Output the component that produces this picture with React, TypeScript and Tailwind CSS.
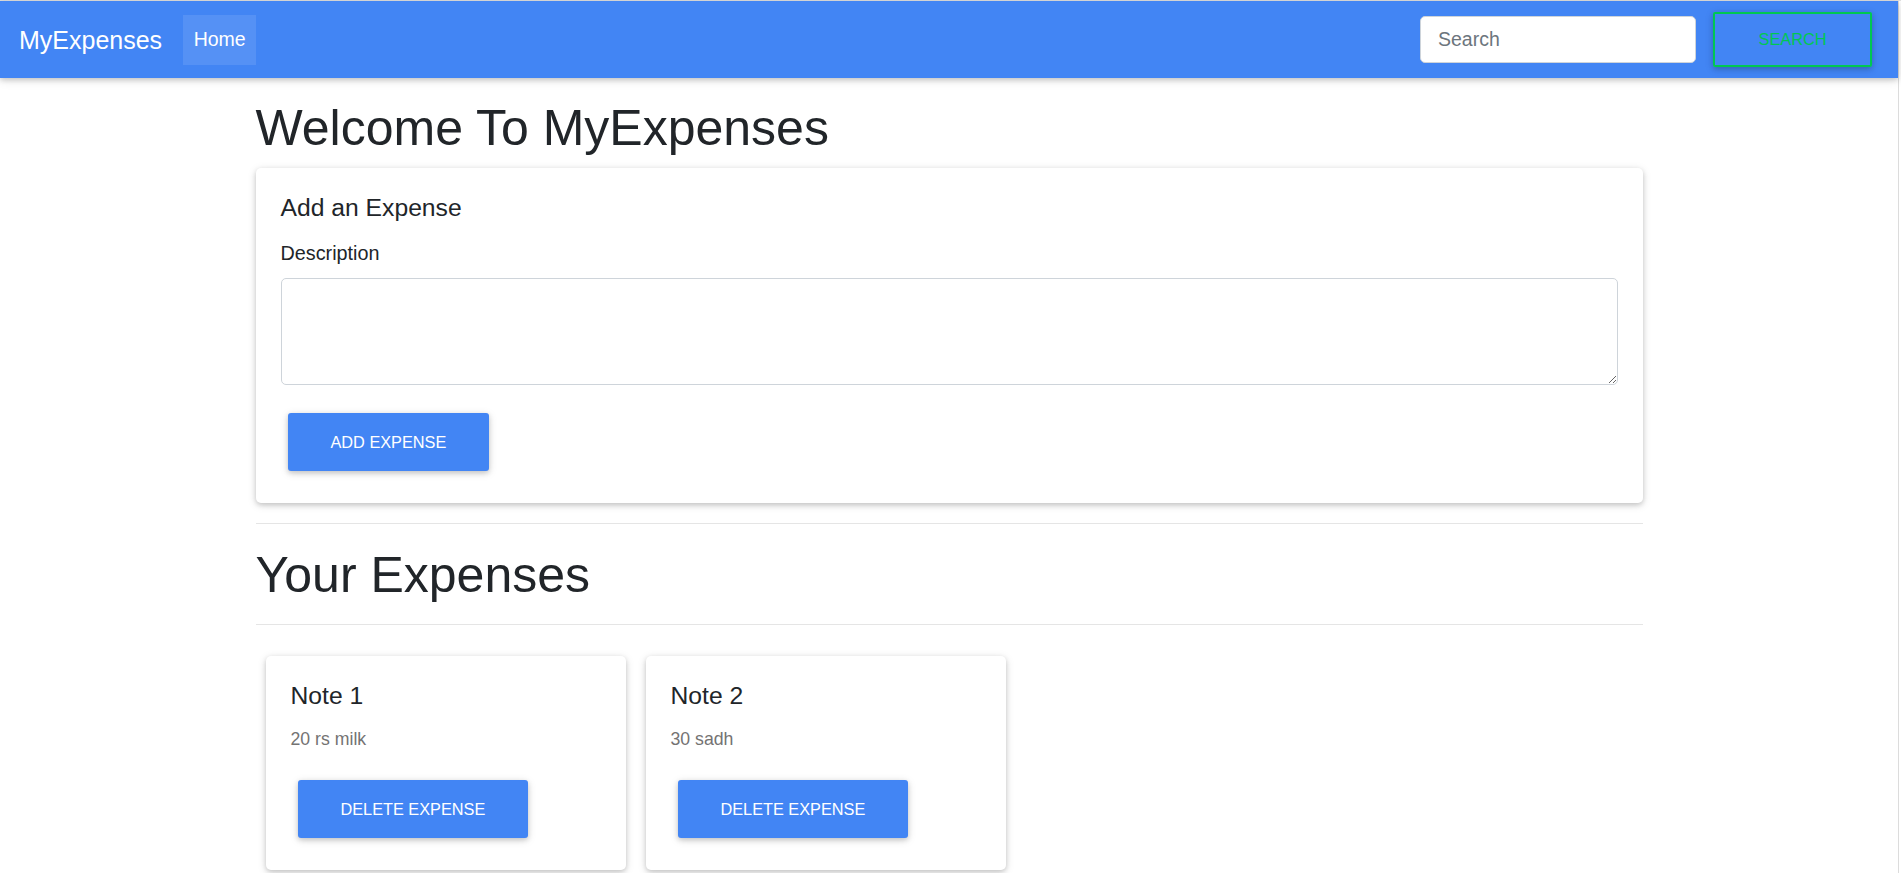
const notes = [
    { title: 'Note 1', description: '20 rs milk' },
    { title: 'Note 2', description: '30 sadh' },
];

function Navbar() {
    return (
        <nav className='relative z-10 flex items-center h-[77px] pl-[19px] pr-[26px] bg-[#4285f4] shadow-[0_2px_5px_0_rgba(0,0,0,0.16),0_2px_10px_0_rgba(0,0,0,0.12)]'>
            <a className='text-white text-[25px] leading-[38px] mr-[21px]' href='#'>MyExpenses</a>
            <a className='text-white text-[19.5px] leading-[29px] px-[10.5px] py-[10.5px] bg-white/10' href='#'>Home</a>
            <form className='ml-auto flex items-center' onSubmit={(e) => e.preventDefault()}>
                <input className='w-[276px] h-[47px] rounded-[5px] bg-white px-[17px] text-[19.5px] text-[#495057] border border-[#ced4da] placeholder:text-[#6c757d] outline-none' type='search' placeholder='Search' />
                <button className='ml-[17px] w-[159px] h-[55px] rounded-[2px] border-2 border-[#00c851] text-[#00c851] text-[16.3px] uppercase shadow-[0_2px_5px_0_rgba(0,0,0,0.16),0_2px_10px_0_rgba(0,0,0,0.12)]' type='submit'>
                    Search
                </button>
            </form>
        </nav>
    );
}

function AddExpense() {
    return (
        <div className='mt-[10px] rounded-[5px] bg-white p-[25px] shadow-[0_2px_5px_0_rgba(0,0,0,0.16),0_2px_10px_0_rgba(0,0,0,0.12)]'>
            <h5 className='text-[24.7px] leading-[29px] mb-[17px]'>Add an Expense</h5>
            <form onSubmit={(e) => e.preventDefault()}>
                <label className='block text-[19.8px] leading-[29px] mb-[10px]' htmlFor='description'>Description</label>
                <textarea className='block w-full h-[107px] rounded-[5px] border border-[#ced4da] px-[12px] py-[6px] text-[19.5px] outline-none' id='description' name='description'></textarea>
                <button className='mt-[28px] mb-[7px] ml-[7px] h-[58px] px-[43px] rounded-[3px] bg-[#4285f4] text-white text-[16.3px] uppercase shadow-[0_2px_5px_0_rgba(0,0,0,0.16),0_2px_10px_0_rgba(0,0,0,0.12)]' type='submit'>
                    Add Expense
                </button>
            </form>
        </div>
    );
}

function NoteCard({ title, description }: { title: string, description: string }) {
    return (
        <div className='m-[10px] w-[360px] rounded-[5px] bg-white p-[25px] shadow-[0_2px_5px_0_rgba(0,0,0,0.16),0_2px_10px_0_rgba(0,0,0,0.12)]'>
            <h5 className='text-[24.7px] leading-[29px] mb-[16px]'>{title}</h5>
            <p className='text-[17.7px] leading-[26px] text-[#747373] mb-[21px]'>{description}</p>
            <button className='m-[7px] h-[58px] px-[43px] rounded-[3px] bg-[#4285f4] text-white text-[16.3px] uppercase shadow-[0_2px_5px_0_rgba(0,0,0,0.16),0_2px_10px_0_rgba(0,0,0,0.12)]' type='button'>
                Delete Expense
            </button>
        </div>
    );
}

export default function App() {
    return (
        <div className="min-h-screen bg-white border-t border-[#e2e2e2] font-['Liberation_Sans',Arial,sans-serif] text-[#212529]">
            <div className='w-[1899px] min-h-screen border-r border-[#dcdcdc]'>
                <Navbar />
                <main className='w-[1387px] mx-auto pb-[20px]'>
                    <h1 className='mt-[20px] text-[50px] leading-[60px]'>Welcome To MyExpenses</h1>
                    <AddExpense />
                    <hr className='mt-[20px] border-t border-black/10' />
                    <h1 className='mt-[21px] text-[50px] leading-[60px]'>Your Expenses</h1>
                    <hr className='mt-[19px] border-t border-black/10' />
                    <div className='mt-[21px] flex flex-wrap'>
                        {notes.map((note) => (
                            <NoteCard key={note.title} title={note.title} description={note.description} />
                        ))}
                    </div>
                </main>
            </div>
        </div>
    );
}
